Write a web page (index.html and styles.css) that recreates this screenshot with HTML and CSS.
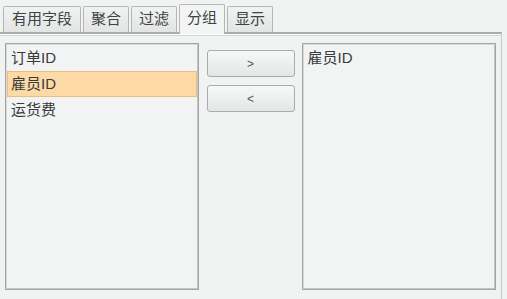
FILE: index.html
```html
<!DOCTYPE html>
<html lang="zh-CN">
<head>
  <meta charset="UTF-8" />
  <title>分组</title>
  <link rel="stylesheet" href="styles.css">
</head>
<body>
  <div class="tabs">
    <div class="tab">有用字段</div>
    <div class="tab">聚合</div>
    <div class="tab">过滤</div>
    <div class="tab active">分组</div>
    <div class="tab">显示</div>
  </div>

  <div class="panel">
    <div class="list">
      <div class="item">订单ID</div>
      <div class="item selected">雇员ID</div>
      <div class="item">运货费</div>
    </div>

    <div class="actions">
      <button class="btn">&gt;</button>
      <button class="btn">&lt;</button>
    </div>

    <div class="list">
      <div class="item">雇员ID</div>
    </div>
  </div>
</body>
</html>
```

FILE: styles.css
```css
* {
  box-sizing: border-box;
}
body {
  margin: 0;
  background: #f1f3f2;
  color: #383b3e;
  font-family: "Liberation Sans", "Noto Sans CJK SC", sans-serif;
  font-size: 15px;
  height: 299px;
  overflow: hidden;
}

/* === Tabs === */
.tabs {
  display: flex;
  align-items: flex-end;
  gap: 2px;
  padding: 4px 0 0 3px;
  height: 32px;
}
.tab {
  height: 26px;
  line-height: 24px;
  padding: 0 7px;
  border: 1px solid #b4b7b7;
  border-bottom: none;
  border-radius: 2px 2px 0 0;
  background: linear-gradient(#f1f2f2, #e3e5e5);
  color: #404346;
}
.tab:first-child {
  padding: 0 8px;
}
.tab.active {
  height: 30px;
  line-height: 26px;
  margin-bottom: -2px;
  background: #f3f5f4;
  position: relative;
}

/* === Panel === */
.panel {
  display: flex;
  margin-right: 5px;
  padding: 9px 5px 0 5px;
  border-top: 2px solid #a9acac;
  border-right: 1px solid #c6c9c9;
  box-shadow: inset 0 1px 0 #fdfdfd, inset 0 2px 0 #d4d6d6;
  height: 267px;
}
.list {
  width: 194px;
  height: 247px;
  border: 1px solid #a3a6a6;
  box-shadow: inset 1px 1px 0 #d7d9d9, inset -1px -1px 0 #c2c4c4;
  padding: 1px;
  background: #f2f4f3;
}
.list:last-child {
  width: 195px;
}
.item {
  height: 26px;
  line-height: 24px;
  padding: 0 3px;
  border: 1px solid transparent;
  color: #383b3e;
}
.item.selected {
  background: #fdd9a5;
  border-color: #ecbd80;
}

/* === Buttons === */
.actions {
  display: flex;
  flex-direction: column;
  gap: 8px;
  padding-top: 7px;
  margin: 0 7px 0 8px;
}
.btn {
  width: 88px;
  height: 27px;
  border: 1px solid #a9acac;
  border-radius: 3px;
  background: linear-gradient(#f7f8f8, #e4e6e6);
  color: #555;
  font-family: "Liberation Sans", sans-serif;
  font-size: 12px;
  padding: 0;
}
```
